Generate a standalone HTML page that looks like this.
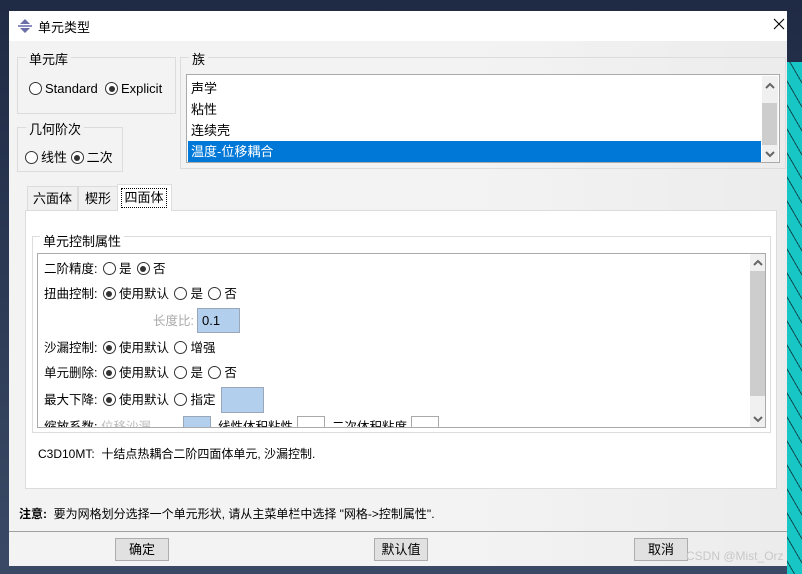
<!DOCTYPE html>
<html><head><meta charset="utf-8"><style>
*{box-sizing:border-box;margin:0;padding:0}
body{width:802px;height:574px;overflow:hidden;background:linear-gradient(#1f2a44,#3a4a66);position:relative;font-family:"Liberation Sans","Noto Sans CJK SC",sans-serif;font-size:12px;color:#000}
.a{position:absolute}
.dlg{left:9px;top:11px;width:778px;height:555px;background:linear-gradient(90deg,#f3f3f3,#f3f3f3 60%,#ececec);}
.title{left:9px;top:11px;width:778px;height:30px;background:#fff}
.grp{border:1px solid #dcdcdc}
.gt{background:#f2f2f2;padding:0 3px;line-height:14px}
.radio{display:inline-block;width:13px;height:13px;border:1px solid #333;border-radius:50%;vertical-align:-2px;margin-right:3px;position:relative;background:#fff}
.radio.on::after{content:"";position:absolute;left:2.5px;top:2.5px;width:6px;height:6px;border-radius:50%;background:#333}
.row{position:absolute;left:44px;white-space:nowrap;line-height:16px;font-size:12.5px}
.row .radio{margin-left:2px}
.inp{position:absolute;background:#b3cfee;border:1px solid #9aa7b8}
.btn{position:absolute;top:538px;width:54px;height:23px;background:#e1e1e1;border:1px solid #adadad;text-align:center;line-height:21px;font-size:13px}
.sb{background:#f0f0f0}
.arr{position:absolute}
</style></head><body>
<div class="a" style="left:787px;top:62px;width:15px;height:512px;background:repeating-linear-gradient(60deg,#18c6c6 0 6px,#0a5050 6px 7px,#18c6c6 7px 12px)"></div>
<div class="a dlg"></div>
<div class="a title"></div>
<svg class="a" style="left:17px;top:18px" width="16" height="16" viewBox="0 0 16 16"><path d="M8 1L3 6h10z M8 15L3 10h10z" fill="#6a6fa8"/><rect x="1" y="7" width="14" height="2" fill="#8a8fc0"/></svg>
<div class="a" style="left:38px;top:17px;font-size:13px">单元类型</div>
<svg class="a" style="left:773px;top:18px" width="12" height="12" viewBox="0 0 12 12"><path d="M1 1L11 11M11 1L1 11" stroke="#000" stroke-width="1.1"/></svg>

<div class="a grp" style="left:17px;top:57px;width:159px;height:57px"></div>
<div class="a gt" style="left:26px;top:53px;font-size:13px">单元库</div>
<div class="a" style="left:29px;top:81px;font-size:13px;white-space:nowrap"><span class="radio"></span>Standard&nbsp; <span class="radio on"></span>Explicit</div>

<div class="a grp" style="left:17px;top:127px;width:106px;height:45px"></div>
<div class="a gt" style="left:26px;top:123px;font-size:13px">几何阶次</div>
<div class="a" style="left:25px;top:147px;font-size:13px;white-space:nowrap"><span class="radio"></span>线性 <span class="radio on"></span>二次</div>

<div class="a grp" style="left:180px;top:57px;width:606px;height:112px"></div>
<div class="a gt" style="left:189px;top:53px;font-size:13px">族</div>
<div class="a" style="left:186px;top:74px;width:594px;height:89px;background:#fff;border:1px solid #aaa"></div>
<div class="a" style="left:191px;top:78px;font-size:13px;line-height:21px">声学<br>粘性<br>连续壳</div>
<div class="a" style="left:188px;top:141px;width:573px;height:21px;background:#0078d7;color:#fff;font-size:13px;line-height:21px;padding-left:3px">温度-位移耦合</div>
<div class="a sb" style="left:762px;top:76px;width:16px;height:86px"></div>
<div class="a" style="left:762px;top:103px;width:15px;height:42px;background:#cdcdcd"></div>
<svg class="arr" style="left:765px;top:82px" width="10" height="8"><path d="M1 6L5 2L9 6" stroke="#666" stroke-width="2" fill="none"/></svg>
<svg class="arr" style="left:765px;top:150px" width="10" height="8"><path d="M1 2L5 6L9 2" stroke="#666" stroke-width="2" fill="none"/></svg>

<div class="a" style="left:25px;top:210px;width:752px;height:279px;background:#fff;border:1px solid #dcdcdc"></div>
<div class="a" style="left:27px;top:186px;width:51px;height:24px;background:#f0f0f0;border:1px solid #dcdcdc;border-bottom:none;text-align:center;line-height:24px;font-size:13px">六面体</div>
<div class="a" style="left:78px;top:186px;width:40px;height:24px;background:#f0f0f0;border:1px solid #dcdcdc;border-bottom:none;text-align:center;line-height:24px;font-size:13px">楔形</div>
<div class="a" style="left:117px;top:184px;width:55px;height:27px;background:#fff;border:1px solid #dcdcdc;border-bottom:none"></div>
<div class="a" style="left:121px;top:188px;width:46px;height:20px;border:1px dotted #000;text-align:center;line-height:18px;font-size:13px">四面体</div>

<div class="a grp" style="left:32px;top:236px;width:739px;height:197px"></div>
<div class="a" style="left:40px;top:231px;background:#fff;padding:0 3px;font-size:13px">单元控制属性</div>
<div class="a" style="left:37px;top:253px;width:729px;height:175px;border:1px solid #aaa;background:#fff;overflow:hidden">
 <div class="row" style="left:6px;top:7px">二阶精度: <span class="radio"></span>是 <span class="radio on"></span>否</div>
 <div class="row" style="left:6px;top:32px">扭曲控制: <span class="radio on"></span>使用默认 <span class="radio"></span>是 <span class="radio"></span>否</div>
 <div class="row" style="left:115px;top:59px;color:#aaa">长度比:</div>
 <div class="inp" style="left:159px;top:54px;width:43px;height:25px;padding:4px 4px;font-size:13px">0.1</div>
 <div class="row" style="left:6px;top:86px">沙漏控制: <span class="radio on"></span>使用默认 <span class="radio"></span>增强</div>
 <div class="row" style="left:6px;top:111px">单元删除: <span class="radio on"></span>使用默认 <span class="radio"></span>是 <span class="radio"></span>否</div>
 <div class="row" style="left:6px;top:138px">最大下降: <span class="radio on"></span>使用默认 <span class="radio"></span>指定</div>
 <div class="inp" style="left:183px;top:133px;width:43px;height:26px"></div>
 <div class="row" style="left:6px;top:165px">缩放系数: <span style="color:#bbb">位移沙漏</span></div>
 <div class="inp" style="left:145px;top:162px;width:28px;height:20px"></div>
 <div class="row" style="left:180px;top:165px">线性体积粘性</div>
 <div class="a" style="left:259px;top:162px;width:28px;height:20px;border:1px solid #aaa"></div>
 <div class="row" style="left:294px;top:165px">二次体积粘度</div>
 <div class="a" style="left:373px;top:162px;width:28px;height:20px;border:1px solid #aaa"></div>
 <div class="a sb" style="left:712px;top:0;width:16px;height:174px"></div>
 <div class="a" style="left:712px;top:17px;width:15px;height:125px;background:#cdcdcd"></div>
 <svg class="arr" style="left:715px;top:5px" width="10" height="8"><path d="M1 6L5 2L9 6" stroke="#666" stroke-width="2" fill="none"/></svg>
 <svg class="arr" style="left:715px;top:161px" width="10" height="8"><path d="M1 2L5 6L9 2" stroke="#666" stroke-width="2" fill="none"/></svg>
</div>

<div class="a" style="left:38px;top:445px">C3D10MT:&nbsp; 十结点热耦合二阶四面体单元, 沙漏控制.</div>
<div class="a" style="left:19px;top:505px"><b>注意:</b>&nbsp; 要为网格划分选择一个单元形状, 请从主菜单栏中选择 "网格-&gt;控制属性".</div>
<div class="a" style="left:9px;top:531px;width:778px;height:1px;background:#a0a0a0"></div>
<div class="btn" style="left:115px">确定</div>
<div class="btn" style="left:374px">默认值</div>
<div class="btn" style="left:634px">取消</div>
<div class="a" style="left:686px;top:549px;color:#c8c8c8;font-size:12px">CSDN @Mist_Orz</div>
</body></html>
